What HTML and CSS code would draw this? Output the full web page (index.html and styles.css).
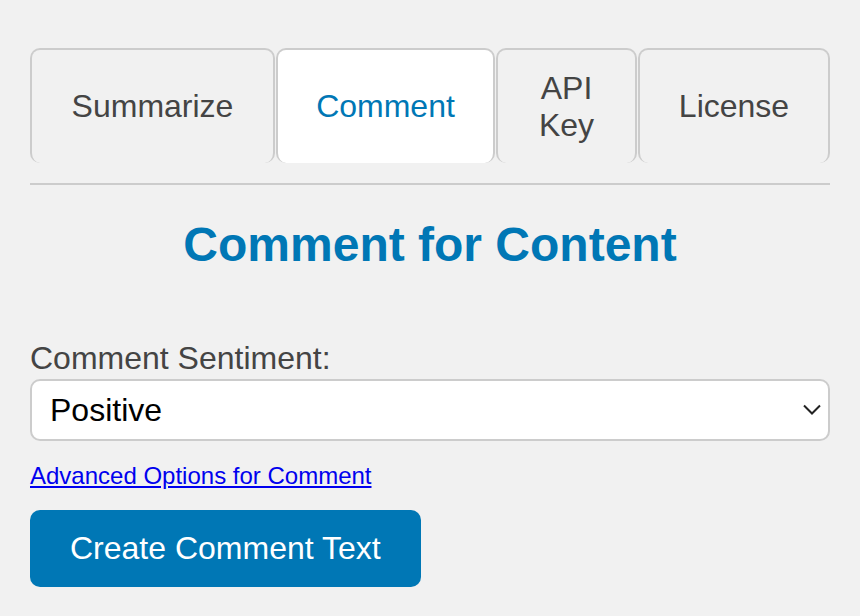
FILE: index.html
```html
<!DOCTYPE html>
<html>
<head>
<meta charset="utf-8">
<link rel="stylesheet" href="styles.css">
</head>
<body>
<div class="popup">
  <div class="tabs">
    <button class="tab">Summarize</button>
    <button class="tab active">Comment</button>
    <button class="tab">API Key</button>
    <button class="tab">License</button>
  </div>
  <hr class="divider">
  <h1 class="title">Comment for Content</h1>
  <label class="label" for="sentiment">Comment Sentiment:</label>
  <div class="select-wrap">
    <select id="sentiment" class="select">
      <option>Positive</option>
      <option>Neutral</option>
      <option>Negative</option>
    </select>
    <svg class="chevron" width="18" height="11" viewBox="0 0 18 11"><path d="M1 1.5 L9 9.5 L17 1.5" fill="none" stroke="#222" stroke-width="2"/></svg>
  </div>
  <a class="link" href="#">Advanced Options for Comment</a>
  <button class="primary">Create Comment Text</button>
</div>
</body>
</html>
```
FILE: styles.css
```css
html, body {
  margin: 0;
  padding: 0;
  background: #f1f1f1;
}
body {
  font-family: "Liberation Sans", Arial, sans-serif;
  color: #444;
}
.popup {
  padding: 48px 30px 0 30px;
  width: 800px;
}
.tabs {
  display: grid;
  grid-template-columns: 245fr 219fr 141fr 192fr;
  column-gap: 1px;
  height: 115px;
}
.tab {
  font-family: "Liberation Sans", Arial, sans-serif;
  font-size: 32px;
  line-height: 37px;
  color: #444;
  background: #f1f1f1;
  border: 2px solid #ccc;
  border-bottom: none;
  border-radius: 10px;
  padding: 0 30px;
  margin: 0;
}
.tab.active {
  background: #fff;
  color: #0077b5;
}
.divider {
  border: none;
  height: 2px;
  background: #ccc;
  margin: 20px 0 0 0;
}
.title {
  margin: 33px 0 0 0;
  text-align: center;
  font-size: 48px;
  line-height: 54px;
  font-weight: bold;
  color: #0077b5;
}
.label {
  display: block;
  margin-top: 68px;
  font-size: 32px;
  line-height: 36px;
  color: #444;
}
.select-wrap {
  position: relative;
  margin-top: 3px;
}
.select {
  appearance: none;
  -webkit-appearance: none;
  width: 100%;
  height: 62px;
  box-sizing: border-box;
  border: 2px solid #ccc;
  border-radius: 10px;
  background: #fff;
  font-family: "Liberation Sans", Arial, sans-serif;
  font-size: 32px;
  color: #000;
  padding: 0 18px;
  margin: 0;
}
.chevron {
  position: absolute;
  right: 9px;
  top: 25px;
  pointer-events: none;
}
.link {
  display: inline-block;
  margin-top: 21px;
  font-size: 24px;
  line-height: 28px;
  color: #0000ee;
  text-decoration: underline;
}
.primary {
  display: block;
  margin-top: 20px;
  height: 77px;
  padding: 0 40px;
  border: none;
  border-radius: 10px;
  background: #0077b5;
  color: #fff;
  font-family: "Liberation Sans", Arial, sans-serif;
  font-size: 32px;
}
```
